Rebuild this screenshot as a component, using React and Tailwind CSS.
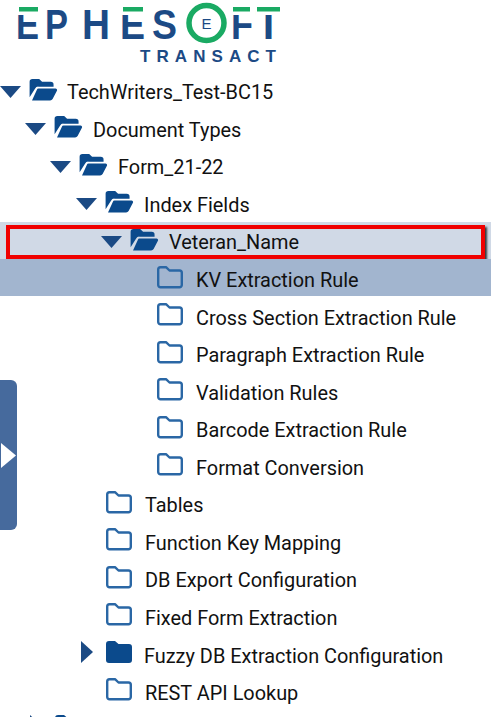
const BLUE = '#1c4a85'

const rows = [
  { depth: 0, icon: 'open', label: 'TechWriters_Test-BC15' },
  { depth: 1, icon: 'open', label: 'Document Types' },
  { depth: 2, icon: 'open', label: 'Form_21-22' },
  { depth: 3, icon: 'open', label: 'Index Fields' },
  { depth: 4, icon: 'open', label: 'Veteran_Name', boxed: true },
  { depth: 5, icon: 'closed', label: 'KV Extraction Rule', selected: true },
  { depth: 5, icon: 'closed', label: 'Cross Section Extraction Rule' },
  { depth: 5, icon: 'closed', label: 'Paragraph Extraction Rule' },
  { depth: 5, icon: 'closed', label: 'Validation Rules' },
  { depth: 5, icon: 'closed', label: 'Barcode Extraction Rule' },
  { depth: 5, icon: 'closed', label: 'Format Conversion' },
  { depth: 3, icon: 'closed', label: 'Tables' },
  { depth: 3, icon: 'closed', label: 'Function Key Mapping' },
  { depth: 3, icon: 'closed', label: 'DB Export Configuration' },
  { depth: 3, icon: 'closed', label: 'Fixed Form Extraction' },
  { depth: 3, icon: 'filled', label: 'Fuzzy DB Extraction Configuration' },
  { depth: 3, icon: 'closed', label: 'REST API Lookup' },
]

function Logo() {
  const letter = { fontFamily: 'Liberation Sans', fontWeight: 700, fontSize: 42.5, fill: BLUE }
  return (
    <svg width="300" height="73" viewBox="0 0 300 73" className="block">
      <text x="16" y="38.5" textLength="23" lengthAdjust="spacingAndGlyphs" style={letter}>E</text>
      <text x="45" y="38.5" textLength="23" lengthAdjust="spacingAndGlyphs" style={letter}>P</text>
      <text x="82" y="38.5" textLength="28" lengthAdjust="spacingAndGlyphs" style={letter}>H</text>
      <text x="120" y="38.5" textLength="25" lengthAdjust="spacingAndGlyphs" style={letter}>E</text>
      <text x="152" y="38.5" textLength="25" lengthAdjust="spacingAndGlyphs" style={letter}>S</text>
      <text x="231" y="38.5" textLength="22" lengthAdjust="spacingAndGlyphs" style={letter}>F</text>
      <text x="256" y="38.5" textLength="25" lengthAdjust="spacingAndGlyphs" style={letter}>T</text>
      {/* green caps over the letter tops */}
      <rect x="15" y="5" width="26" height="10" fill="#fff" />
      <rect x="119" y="5" width="26" height="10" fill="#fff" />
      <rect x="231" y="5" width="24" height="10" fill="#fff" />
      <rect x="256" y="5" width="26" height="10" fill="#fff" />
      <rect x="19" y="7" width="19" height="4.5" fill="#1aaa63" />
      <rect x="123" y="7" width="20" height="4.5" fill="#1aaa63" />
      <rect x="233" y="7" width="17" height="4.5" fill="#1aaa63" />
      <rect x="257" y="7" width="23" height="4.5" fill="#1aaa63" />
      <circle cx="206.5" cy="23" r="17.5" fill="none" stroke="#1aaa63" strokeWidth="5.5" />
      <text x="201.5" y="29" style={{ ...letter, fontSize: 15, fontWeight: 400 }}>E</text>
      <text x="140" y="62" textLength="136" style={{ fontFamily: 'Liberation Sans', fontWeight: 700, fontSize: 17, fill: BLUE }}>TRANSACT</text>
    </svg>
  )
}

function FolderIcon({ type }) {
  if (type === 'open') {
    return (
      <svg width="29" height="23" viewBox="0 0 29 24" className="shrink-0">
        <path d="M0 4 a3 3 0 0 1 3-3 h7 l3 3 h9 a3 3 0 0 1 3 3 v2 H9 a3.5 3.5 0 0 0-3.2 2 L0 20 Z" fill="#0b4a8c" />
        <path d="M9.5 11 H27 a1.6 1.6 0 0 1 1.5 2.3 L24 22 a3 3 0 0 1-2.6 1.5 H2.5 L7.5 12.4 a2 2 0 0 1 2-1.4 Z" fill="#0b4a8c" />
      </svg>
    )
  }
  if (type === 'filled') {
    return (
      <svg width="27" height="23" viewBox="0 0 27 23" className="shrink-0">
        <path d="M0 3 a3 3 0 0 1 3-3 h6 l3.5 3 H23 a3 3 0 0 1 3 3 v13 a3 3 0 0 1-3 3 H3 a3 3 0 0 1-3-3 Z" fill="#0b4a8c" />
      </svg>
    )
  }
  return (
    <svg width="27" height="23" viewBox="0 0 27 23" className="shrink-0">
      <path d="M1.2 3.5 a2.3 2.3 0 0 1 2.3-2.3 h5.5 l3.5 3.3 H22.5 a2.3 2.3 0 0 1 2.3 2.3 V19 a2.3 2.3 0 0 1-2.3 2.3 H3.5 a2.3 2.3 0 0 1-2.3-2.3 Z" fill="none" stroke="#2a67a5" strokeWidth="2.4" strokeLinejoin="round" />
    </svg>
  )
}

function Arrow({ type }) {
  if (type === 'open') {
    return (
      <svg width="21" height="12" viewBox="0 0 21 12" className="shrink-0">
        <path d="M0 0 H21 L10.5 12 Z" fill="#1b4a84" />
      </svg>
    )
  }
  return (
    <svg width="12" height="22" viewBox="0 0 12 22" className="shrink-0">
      <path d="M0 0 L12 11 L0 22 Z" fill="#1b4a84" />
    </svg>
  )
}

function TreeRow({ depth, icon, label }) {
  const left = ['pl-0', 'pl-[25px]', 'pl-[50px]', 'pl-[76px]', 'pl-[101px]', 'pl-[127px]'][depth]
  return (
    <div className={`flex items-center h-full ${left}`}>
      <div className="w-[29px] flex items-center shrink-0 mb-[3px]">
        {icon === 'open' && <Arrow type="open" />}
        {icon === 'filled' && <div className="pl-[5px] flex mb-[6px]"><Arrow type="closed" /></div>}
      </div>
      <div className={`flex shrink-0 mb-[8px] ${icon === 'open' ? 'w-[38px]' : 'w-[39px] pl-px'}`}>
        <FolderIcon type={icon} />
      </div>
      <span className={`text-[19.9px] text-[#111] whitespace-nowrap ${depth > 0 && icon !== 'filled' ? 'ml-px' : ''}`}>{label}</span>
    </div>
  )
}

export default function App() {
  return (
    <div className="relative w-[491px] h-[717px] overflow-hidden bg-white font-['Roboto',sans-serif]">
      <Logo />

      <div className="pt-[1.5px]">
        {rows.map(r => {
          if (r.boxed) {
            return (
              <div key={r.label} className="relative -mt-[2.5px] h-[40px] bg-[#d0d9e6] px-[6px] pt-[3px]">
                <div className="h-[34px] border-4 border-[#f00000] shadow-[1.5px_1.5px_2px_rgba(0,0,0,0.75)]">
                  <div className="-ml-[10px] h-full pt-[2px]">
                    <TreeRow {...r} />
                  </div>
                </div>
              </div>
            )
          }
          if (r.selected) {
            return (
              <div key={r.label} className="relative -mt-[3px] mb-[3.56px] h-[37px] pt-[7px] bg-[#a2b5cf]">
                <TreeRow {...r} />
              </div>
            )
          }
          return (
            <div key={r.label} className="h-[37.56px]">
              <TreeRow {...r} />
            </div>
          )
        })}
        {/* next row, only its top edge shows at the bottom of the window */}
        <div className="h-[37.56px] pl-[30px] pt-[2px] flex items-start">
          <div className="w-[25px]"><Arrow type="closed" /></div>
          <FolderIcon type="filled" />
        </div>
      </div>

      {/* collapsed side panel handle */}
      <div className="absolute left-0 top-[380px] w-[17px] h-[150px] bg-[#466a9d] rounded-r-[6px] flex items-center">
        <svg width="16" height="27" viewBox="0 0 16 27">
          <path d="M1 1 L16 13.5 L1 26 Z" fill="#fff" />
        </svg>
      </div>
    </div>
  )
}
